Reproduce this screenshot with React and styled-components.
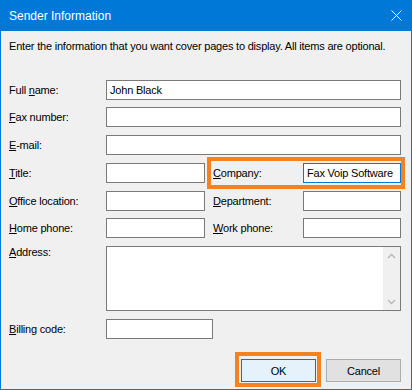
import React from 'react';
import styled, { createGlobalStyle, css } from 'styled-components';

const GlobalStyle = createGlobalStyle`
  html, body {
    margin: 0;
    padding: 0;
    background: #ffffff;
  }
  body {
    font-family: "Liberation Sans", Arial, sans-serif;
    font-size: 11px;
    letter-spacing: -0.2px;
    color: #000;
  }
`;

const accent = '#0078d7';
const orange = '#f5821f';

const Window = styled.div`
  width: 412px;
  height: 390px;
  display: flex;
  flex-direction: column;
`;

const TitleBar = styled.div`
  height: 31px;
  flex: none;
  background: ${accent};
  display: flex;
  align-items: center;
  justify-content: space-between;
  padding: 0 10px 0 9px;
  color: #fff;
  font-size: 12px;
  letter-spacing: 0;
`;

const CloseButton = styled.div`
  width: 12px;
  height: 12px;
  display: flex;
  align-items: center;
  justify-content: center;
`;

const Body = styled.div`
  flex: 1;
  background: #f0f0f0;
  border: 1px solid ${accent};
  border-top: none;
  padding: 0 10px 0 8px;
  display: flex;
  flex-direction: column;
`;

const Intro = styled.div`
  margin-top: 8px;
  line-height: 15px;
`;

const Form = styled.div`
  margin-top: 26px;
  display: flex;
  flex-direction: column;
`;

const Row = styled.div`
  display: flex;
  align-items: ${(p) => (p.$top ? 'flex-start' : 'center')};
  margin-top: ${(p) => p.$gap || 0}px;
`;

const Pair = styled.div`
  position: relative;
  display: flex;
  align-items: center;

  ${(p) =>
    p.$highlight &&
    css`
      &::before {
        content: '';
        position: absolute;
        left: 2px;
        right: -4px;
        top: -6px;
        bottom: -6px;
        border: 4px solid ${orange};
        pointer-events: none;
      }
    `}
`;

const Label = styled.label`
  width: ${(p) => p.$w}px;
  box-sizing: border-box;
  padding-left: ${(p) => p.$indent || 0}px;
  line-height: 13px;
  white-space: nowrap;

  u {
    text-decoration: underline;
    text-underline-offset: 1px;
  }
`;

const TextBox = styled.div`
  width: ${(p) => p.$w}px;
  height: 20px;
  box-sizing: border-box;
  background: #fff;
  border: 1px solid ${(p) => (p.$focused ? accent : '#7a7a7a')};
  padding: 0 3px;
  display: flex;
  align-items: center;
  white-space: nowrap;
  overflow: hidden;
`;

const AddressBox = styled.div`
  width: 295px;
  height: 65px;
  box-sizing: border-box;
  background: #fff;
  border: 1px solid #7a7a7a;
  display: flex;
  justify-content: flex-end;
`;

const ScrollTrack = styled.div`
  width: 17px;
  background: #f0f0f0;
  display: flex;
  flex-direction: column;
  justify-content: space-between;
`;

const ScrollArrow = styled.div`
  height: 17px;
  display: flex;
  align-items: center;
  justify-content: center;
`;

const ButtonRow = styled.div`
  margin-top: 20px;
  display: flex;
  justify-content: flex-end;
  gap: 10px;
`;

const ButtonWrap = styled.div`
  position: relative;
  display: flex;

  ${(p) =>
    p.$highlight &&
    css`
      &::before {
        content: '';
        position: absolute;
        left: -6px;
        right: -5px;
        top: -7px;
        bottom: -5px;
        border: 4px solid ${orange};
        pointer-events: none;
      }
    `}
`;

const Button = styled.button`
  width: 75px;
  height: 23px;
  box-sizing: border-box;
  margin: 0;
  padding: 0;
  font: inherit;
  letter-spacing: inherit;
  color: #000;
  background: ${(p) => (p.$primary ? '#e5f1fb' : '#e1e1e1')};
  border: 1px solid ${(p) => (p.$primary ? accent : '#adadad')};
`;

const Chevron = ({ up }) => (
  <svg width="9" height="6" viewBox="0 0 9 6">
    <path
      d={up ? 'M1 5 L4.5 1.5 L8 5' : 'M1 1 L4.5 4.5 L8 1'}
      fill="none"
      stroke="#b5b5b5"
      strokeWidth="1.3"
    />
  </svg>
);

const Field = ({ label, value, w, focused }) => (
  <>
    {label}
    <TextBox $w={w} $focused={focused}>
      {value}
    </TextBox>
  </>
);

export default function App() {
  return (
    <Window>
      <GlobalStyle />
      <TitleBar>
        <span>Sender Information</span>
        <CloseButton>
          <svg width="11" height="11" viewBox="0 0 11 11">
            <path d="M0.5 0.5 L10.5 10.5 M10.5 0.5 L0.5 10.5" stroke="#fff" strokeWidth="1" />
          </svg>
        </CloseButton>
      </TitleBar>
      <Body>
        <Intro>Enter the information that you want cover pages to display. All items are optional.</Intro>
        <Form>
          <Row>
            <Label $w={97}>Full <u>n</u>ame:</Label>
            <TextBox $w={295}>John Black</TextBox>
          </Row>
          <Row $gap={7}>
            <Label $w={97}><u>F</u>ax number:</Label>
            <TextBox $w={295} />
          </Row>
          <Row $gap={8}>
            <Label $w={97}><u>E</u>-mail:</Label>
            <TextBox $w={295} />
          </Row>
          <Row $gap={8}>
            <Label $w={97}><u>T</u>itle:</Label>
            <TextBox $w={99} />
            <Pair $highlight>
              <Field label={<Label $w={98} $indent={8}><u>C</u>ompany:</Label>} value="Fax Voip Software" w={98} focused />
            </Pair>
          </Row>
          <Row $gap={8}>
            <Label $w={97}><u>O</u>ffice location:</Label>
            <TextBox $w={99} />
            <Pair>
              <Field label={<Label $w={98} $indent={8}><u>D</u>epartment:</Label>} w={98} />
            </Pair>
          </Row>
          <Row $gap={7}>
            <Label $w={97}><u>H</u>ome phone:</Label>
            <TextBox $w={99} />
            <Pair>
              <Field label={<Label $w={98} $indent={8}><u>W</u>ork phone:</Label>} w={98} />
            </Pair>
          </Row>
          <Row $gap={8} $top>
            <Label $w={97}><u>A</u>ddress:</Label>
            <AddressBox>
              <ScrollTrack>
                <ScrollArrow><Chevron up /></ScrollArrow>
                <ScrollArrow><Chevron /></ScrollArrow>
              </ScrollTrack>
            </AddressBox>
          </Row>
          <Row $gap={8}>
            <Label $w={97}><u>B</u>illing code:</Label>
            <TextBox $w={107} />
          </Row>
        </Form>
        <ButtonRow>
          <ButtonWrap $highlight>
            <Button $primary>OK</Button>
          </ButtonWrap>
          <ButtonWrap>
            <Button>Cancel</Button>
          </ButtonWrap>
        </ButtonRow>
      </Body>
    </Window>
  );
}
